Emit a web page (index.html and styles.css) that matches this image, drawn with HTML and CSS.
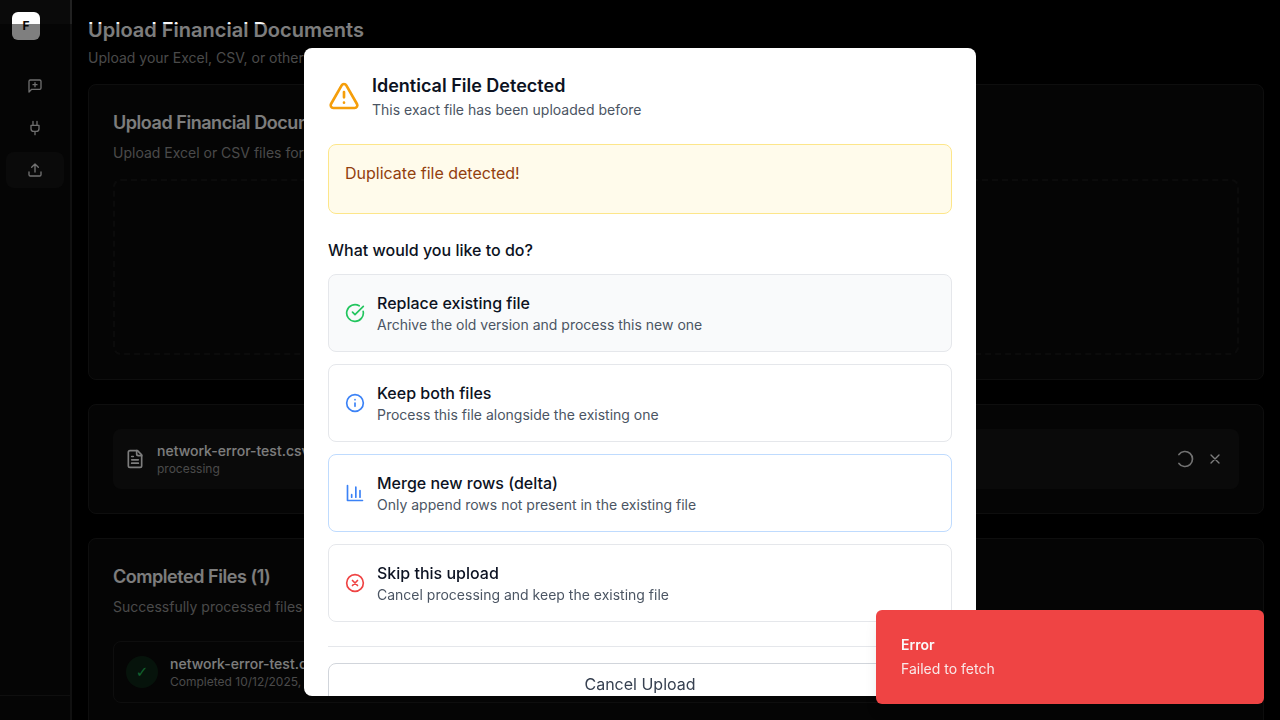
FILE: index.html
```html
<!DOCTYPE html>
<html lang="en">
<head>
<meta charset="utf-8">
<title>Upload Financial Documents</title>
<link rel="stylesheet" href="styles.css">
</head>
<body>
<div class="app">
  <aside class="sidebar">
    <div class="logo">F</div>
    <nav class="nav">
      <a class="nav-item"><svg class="icon" viewBox="0 0 24 24"><path d="M21 15a2 2 0 0 1-2 2H7l-4 4V5a2 2 0 0 1 2-2h14a2 2 0 0 1 2 2z"/><path d="M12 7v6M9 10h6"/></svg></a>
      <a class="nav-item"><svg class="icon" viewBox="0 0 24 24"><path d="M12 22v-5M9 8V2M15 8V2M18 8v5a4 4 0 0 1-4 4h-4a4 4 0 0 1-4-4V8Z"/></svg></a>
      <a class="nav-item active"><svg class="icon" viewBox="0 0 24 24"><path d="M21 15v4a2 2 0 0 1-2 2H5a2 2 0 0 1-2-2v-4"/><path d="m17 8-5-5-5 5M12 3v12"/></svg></a>
    </nav>
    <div class="sidebar-footer"></div>
  </aside>
  <main class="main">
    <header class="page-head">
      <h1>Upload Financial Documents</h1>
      <p>Upload your Excel, CSV, or other financial files</p>
    </header>
    <section class="card">
      <h2>Upload Financial Documents</h2>
      <p class="muted">Upload Excel or CSV files for processing</p>
      <div class="dropzone"></div>
    </section>
    <section class="card">
      <div class="file-row">
        <svg class="icon file" viewBox="0 0 24 24"><path d="M15 2H6a2 2 0 0 0-2 2v16a2 2 0 0 0 2 2h12a2 2 0 0 0 2-2V7Z"/><path d="M14 2v4a2 2 0 0 0 2 2h4M10 9H8M16 13H8M16 17H8"/></svg>
        <div class="file-text">
          <div class="file-name">network-error-test.csv</div>
          <div class="file-meta">processing</div>
        </div>
        <svg class="icon spinner" viewBox="0 0 24 24"><path d="M21 12a9 9 0 1 1-6.219-8.56"/></svg>
        <svg class="icon close" viewBox="0 0 24 24"><path d="M18 6 6 18M6 6l12 12"/></svg>
      </div>
    </section>
    <section class="card">
      <h2>Completed Files (1)</h2>
      <p class="muted">Successfully processed files</p>
      <div class="done-row">
        <div class="check">✓</div>
        <div class="file-text">
          <div class="file-name">network-error-test.csv</div>
          <div class="file-meta">Completed 10/12/2025,</div>
        </div>
      </div>
    </section>
  </main>
</div>

<div class="overlay">
  <div class="modal">
    <div class="modal-head">
      <svg class="icon warn" viewBox="0 0 24 24"><path d="m21.73 18-8-14a2 2 0 0 0-3.48 0l-8 14A2 2 0 0 0 4 21h16a2 2 0 0 0 1.73-3M12 9v4M12 17h.01"/></svg>
      <div>
        <h3>Identical File Detected</h3>
        <p class="sub">This exact file has been uploaded before</p>
      </div>
    </div>
    <div class="notice">Duplicate file detected!</div>
    <h4>What would you like to do?</h4>
    <div class="options">
      <button class="option hovered">
        <svg class="icon green" viewBox="0 0 24 24"><path d="M21.801 10A10 10 0 1 1 17 3.335"/><path d="m9 11 3 3L22 4"/></svg>
        <span><span class="opt-title">Replace existing file</span><span class="sub">Archive the old version and process this new one</span></span>
      </button>
      <button class="option">
        <svg class="icon blue" viewBox="0 0 24 24"><circle cx="12" cy="12" r="10"/><path d="M12 16v-4M12 8h.01"/></svg>
        <span><span class="opt-title">Keep both files</span><span class="sub">Process this file alongside the existing one</span></span>
      </button>
      <button class="option merge">
        <svg class="icon blue" viewBox="0 0 24 24"><path d="M3 3v18h18M18 17V9M13 17V5M8 17v-3"/></svg>
        <span><span class="opt-title">Merge new rows (delta)</span><span class="sub">Only append rows not present in the existing file</span></span>
      </button>
      <button class="option">
        <svg class="icon red" viewBox="0 0 24 24"><circle cx="12" cy="12" r="10"/><path d="m15 9-6 6M9 9l6 6"/></svg>
        <span><span class="opt-title">Skip this upload</span><span class="sub">Cancel processing and keep the existing file</span></span>
      </button>
    </div>
    <div class="modal-foot"><button class="cancel">Cancel Upload</button></div>
  </div>
</div>

<div class="toast">
  <div class="toast-title">Error</div>
  <div class="toast-text">Failed to fetch</div>
</div>
</body>
</html>
```
FILE: styles.css
```css
* { box-sizing: border-box; margin: 0; padding: 0; }
body { font-family: Inter, sans-serif; background: #000; color: #fafafa; height: 720px; overflow: hidden; font-size: 16px; line-height: 24px; }
button { font: inherit; text-align: left; }
.icon { fill: none; stroke: currentColor; stroke-width: 2; stroke-linecap: round; stroke-linejoin: round; flex: none; }

.app { display: flex; height: 720px; overflow: hidden; }
.sidebar { width: 72px; flex: none; display: flex; flex-direction: column; background: #0a0a0a; border-right: 2px solid #212121; }
.logo { width: 28px; height: 28px; margin: 12px 0 0 12px; border-radius: 6px; background: #fff; color: #0a0a0a; font-size: 12px; font-weight: 700; line-height: 28px; text-align: center; }
.nav { display: flex; flex-direction: column; gap: 6px; padding: 28px 6px 0; }
.nav-item { height: 36px; border-radius: 8px; display: flex; align-items: center; justify-content: center; color: #dcdcdc; }
.nav-item .icon { width: 16px; height: 16px; }
.nav-item.active { background: #141414; color: #e5e5e5; }
.sidebar-footer { margin-top: auto; height: 25px; border-top: 1px solid #1f1f1f; }

.main { flex: 1; min-width: 0; display: flex; flex-direction: column; gap: 24px; padding: 16px 16px 0; }
.page-head { margin-bottom: -8px; }
.page-head h1 { font-size: 20px; line-height: 28px; font-weight: 600; }
.page-head p { font-size: 14px; line-height: 20px; margin-top: 4px; color: #949494; }
.card { flex: none; border: 1px solid #1c1c1c; border-radius: 8px; background: #0a0a0a; padding: 24px; }
.card h2 { font-size: 18px; line-height: 28px; font-weight: 600; letter-spacing: -0.45px; }
.muted { font-size: 14px; line-height: 20px; margin-top: 6px; color: #949494; }
.dropzone { height: 176px; margin-top: 16px; border: 2px dashed #171717; border-radius: 8px; }
.file-row { height: 60px; border-radius: 8px; background: #141414; display: flex; align-items: center; padding: 0 16px 0 12px; }
.file { width: 20px; height: 20px; }
.file-row .file-text { margin-left: 12px; flex: 1; }
.file-name { font-size: 14px; line-height: 20px; font-weight: 500; }
.file-meta { font-size: 12px; line-height: 16px; color: #949494; }
.spinner { width: 20px; height: 20px; transform: rotate(216deg); color: #e5e5e5; }
.close { width: 16px; height: 16px; margin-left: 12px; color: #fafafa; }
.done-row { height: 62px; margin-top: 24px; border: 1px solid #1c1c1c; border-radius: 8px; display: flex; align-items: center; gap: 12px; padding: 0 12px; }
.check { width: 32px; height: 32px; border-radius: 50%; background: #0d2616; color: #22c55e; font-family: "DejaVu Sans", sans-serif; text-align: center; font-size: 15px; line-height: 32px; }

.overlay { position: fixed; inset: 24px 0 0; background: rgba(0,0,0,.5); display: flex; justify-content: center; align-items: flex-start; padding-top: 24px; }
.modal { width: 672px; height: 648px; overflow: hidden; border-radius: 8px; background: #fff; color: #0c1222; padding: 24px; }
.modal-head { display: flex; align-items: center; gap: 12px; }
.warn { width: 32px; height: 32px; color: #f59e0b; }
.modal h3 { font-size: 18px; line-height: 28px; font-weight: 600; }
.sub { display: block; font-size: 14px; line-height: 20px; color: #4b5563; }
.notice { height: 70px; margin-top: 24px; padding: 16px; border: 1px solid #fde68a; border-radius: 8px; background: #fffbeb; color: #92400e; }
.modal h4 { font-size: 16px; line-height: 24px; font-weight: 500; margin: 24px 0 12px; }
.options { display: flex; flex-direction: column; gap: 12px; }
.option { height: 78px; display: flex; align-items: center; gap: 12px; padding: 16px; border: 1px solid #e5e7eb; border-radius: 8px; background: #fff; color: #0c1222; }
.option .icon { width: 20px; height: 20px; }
.opt-title { display: block; font-weight: 500; }
.hovered { background: #f9fafb; }
.merge { border-color: #bfdbfe; }
.green { color: #22c55e; }
.blue { color: #3b82f6; }
.red { color: #ef4444; }
.modal-foot { margin-top: 24px; padding-top: 16px; border-top: 1px solid #e5e7eb; }
.cancel { width: 100%; height: 42px; border: 1px solid #d1d5db; border-radius: 8px; background: #fff; color: #374151; text-align: center; }

.toast { position: fixed; right: 16px; bottom: 16px; width: 388px; height: 94px; padding: 25px; border-radius: 6px; background: #ef4444; box-shadow: 0 10px 15px -3px rgba(0,0,0,.1), 0 4px 6px -4px rgba(0,0,0,.1); }
.toast-title { font-size: 14px; line-height: 20px; font-weight: 600; }
.toast-text { font-size: 14px; line-height: 20px; margin-top: 4px; opacity: .9; }
```
